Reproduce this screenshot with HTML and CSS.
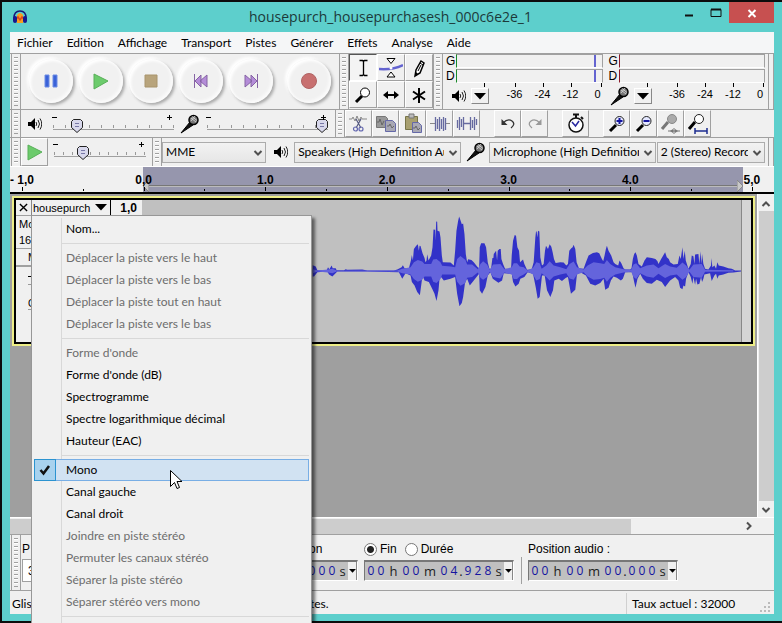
FILE: index.html
```html
<!DOCTYPE html>
<html lang="fr">
<head>
<meta charset="utf-8">
<title>housepurch_housepurchasesh_000c6e2e_1</title>
<link rel="stylesheet" href="styles.css">
</head>
<body>
<svg class="defs" aria-hidden="true">
  <symbol id="speaker" viewBox="0 0 14 14"><path d="M0 5h3l4-4v12l-4-4H0z" fill="#000"/><path d="M8 5q1.500 2 0 4M10 3q3 4 0 8M12 1.500q3.500 5.500 0 11" fill="none" stroke="#222"/></symbol>
  <symbol id="mic" viewBox="0 0 20 20"><path d="M1 19L10 8l3 3z" fill="#111" stroke="#000"/><circle cx="13.500" cy="6" r="4.500" fill="#777" stroke="#000" stroke-width="1.500"/><path d="M11 4l5 4M12 2.500l5 4M11 7l4-5" stroke="#ddd" stroke-width=".8"/></symbol>
  <symbol id="chevron" viewBox="0 0 10 10"><path d="M1.500 3L5 6.500 8.500 3" fill="none" stroke="#505050" stroke-width="2"/></symbol>
  <symbol id="triangle" viewBox="0 0 12 7"><path d="M0 0h12L6 6.500z" fill="#000"/></symbol>
</svg>
<main class="window">
  <header class="titlebar">
    <svg class="logo" viewBox="0 0 16 16"><path d="M5 6q3-4 6 0v8H5z" fill="#f6a020"/><path d="M4 10l2-2 2 3 2-3 2 2" stroke="#d42" stroke-width="1.500" fill="none"/><path d="M2 9Q2 2 8 2t6 7" fill="none" stroke="#181878" stroke-width="1.500"/><rect x="1" y="7" width="4" height="7" rx="2" fill="#18188c"/><rect x="11" y="7" width="4" height="7" rx="2" fill="#18188c"/></svg>
    <h1>housepurch_housepurchasesh_000c6e2e_1</h1>
    <div class="controls">
      <button class="ctl" aria-label="Réduire"><svg viewBox="0 0 12 12"><path d="M2 8.500h8" stroke="#111" stroke-width="2"/></svg></button>
      <button class="ctl" aria-label="Agrandir"><svg viewBox="0 0 12 12"><path d="M1 2.500h10v7H1z" fill="none" stroke="#111"/><path d="M1 2.500h10" stroke="#111" stroke-width="2"/></svg></button>
      <button class="ctl close" aria-label="Fermer"><svg viewBox="0 0 12 12"><path d="M2.500 3l7 7M9.500 3l-7 7" stroke="#fff" stroke-width="2"/></svg></button>
    </div>
  </header>
  <div class="client">
    <nav class="menubar">
      <a href="#">Fichier</a><a href="#">Edition</a><a href="#">Affichage</a><a href="#">Transport</a><a href="#">Pistes</a><a href="#">Générer</a><a href="#">Effets</a><a href="#">Analyse</a><a href="#">Aide</a>
    </nav>

    <div class="row row-main">
      <i class="grip"></i>
      <div class="transport">
        <button class="round" aria-label="Pause"><svg viewBox="0 0 20 20"><path d="M4 4h4v12H4zM12 4h4v12h-4z" fill="#3a62d8" stroke="#6d8ce4"/></svg></button>
        <button class="round" aria-label="Lecture"><svg viewBox="0 0 20 20"><path d="M3 3l14 7-14 8z" fill="#6ccb6c" stroke="#58b058"/></svg></button>
        <button class="round" aria-label="Stop"><svg viewBox="0 0 20 20"><path d="M4 4h12v12H4z" fill="#b8a47c" stroke="#a8946c"/></svg></button>
        <button class="round" aria-label="Début"><svg viewBox="0 0 20 20"><path d="M9 10l7-6v12zM4 10l6-6v12z" fill="#b48cd8" stroke="#8664a4"/><path d="M3.500 3v14" stroke="#8664a4"/></svg></button>
        <button class="round" aria-label="Fin"><svg viewBox="0 0 20 20"><path d="M4 4l7 6-7 6zM10 4l6 6-6 6z" fill="#b48cd8" stroke="#8664a4"/><path d="M16.500 3v14" stroke="#8664a4"/></svg></button>
        <button class="round record" aria-label="Enregistrer"><svg viewBox="0 0 20 20"><circle cx="10" cy="10" r="7.500" fill="#c87070" stroke="#b06464"/></svg></button>
      </div>
      <i class="grip"></i>
      <div class="tools">
        <button class="tool on" aria-label="Sélection"><svg viewBox="0 0 24 24"><path d="M8.500 4.500h3l1 1 1-1h3M8.500 19.500h3l1-1 1 1h3M12.500 5v14" fill="none" stroke="#000" stroke-width="1.300"/></svg></button>
        <button class="tool" aria-label="Enveloppe"><svg viewBox="0 0 24 24"><path d="M0 13q14 1 24-4" fill="none" stroke="#6464d0" stroke-width="2.500"/><path d="M8 2.500h8l-4 5zM8 21h8l-4-5z" fill="#fff" stroke="#000"/><circle cx="12" cy="12" r="1.500" fill="#fff"/></svg></button>
        <button class="tool" aria-label="Retouche"><svg viewBox="0 0 24 24"><path d="M8 20l1-6 5-9 3 2-4 10z" fill="#fff" stroke="#000" stroke-width="1.500"/><path d="M8 20l1-4 2 2z" fill="#000"/><path d="M13 7l3 2M11 15l3-6" stroke="#000"/></svg></button>
        <button class="tool" aria-label="Zoom"><svg viewBox="0 0 24 24"><path d="M5 19l6-6" stroke="#000" stroke-width="3"/><circle cx="14" cy="9.500" r="4.500" fill="#fff" stroke="#000"/></svg></button>
        <button class="tool" aria-label="Glissement"><svg viewBox="0 0 24 24"><path d="M6 12h12" stroke="#000" stroke-width="2"/><path d="M4 12l5-4v8zM20 12l-5-4v8z" fill="#000"/></svg></button>
        <button class="tool" aria-label="Multi-outils"><svg viewBox="0 0 24 24"><path d="M12 5v15M6 8.500l12 8M18 8.500l-12 8" stroke="#000" stroke-width="2"/></svg></button>
      </div>
      <i class="grip"></i>
      <div class="meter">
        <div class="bars play"><span>G</span><b><i></i></b><span>D</span><b><i></i></b></div>
        <div class="scale"><svg class="ic14"><use href="#speaker"/></svg><button class="drop" aria-label="Options de lecture"><svg><use href="#triangle"/></svg></button><span>-36</span><span>-24</span><span>-12</span><span class="zero">0</span></div>
      </div>
      <div class="meter">
        <div class="bars rec"><span>G</span><b></b><span>D</span><b></b></div>
        <div class="scale"><svg class="ic20"><use href="#mic"/></svg><button class="drop" aria-label="Options d’enregistrement"><svg><use href="#triangle"/></svg></button><span>-36</span><span>-24</span><span>-12</span><span class="zero">0</span></div>
      </div>
      <i class="endgrip"></i>
    </div>

    <div class="row row-mix">
      <i class="grip"></i>
      <div class="mixer">
        <svg class="ic14"><use href="#speaker"/></svg>
        <label class="slider"><input type="range" value="20" aria-label="Volume de sortie"></label>
        <svg class="ic20"><use href="#mic"/></svg>
        <label class="slider"><input type="range" value="95" aria-label="Volume d’entrée"></label>
      </div>
      <i class="grip"></i>
      <div class="edit">
        <div class="group">
        <button class="tool" aria-label="Couper"><svg viewBox="0 0 24 24"><path d="M2 7h3l1-2 2 4 2-5 2 5 2-4 1 2h5" fill="none" stroke="#888"/><path d="M9 7l5 9M14 7l-5 9" stroke="#555a80" stroke-width="1.200"/><circle cx="8.500" cy="17" r="2" fill="none" stroke="#6468b0" stroke-width="1.200"/><circle cx="14" cy="17" r="2" fill="none" stroke="#6468b0" stroke-width="1.200"/></svg></button>
        <button class="tool" aria-label="Copier"><svg viewBox="0 0 24 24"><path d="M2.500 4.500h9l2 2v9h-11z" fill="#999" stroke="#777"/><path d="M11.500 8.500h7l3 3v8h-10z" fill="#a8a8b4" stroke="#6468a8"/><path d="M3 10h2l1-3 2 6 2-4M13 14h2l1-2 2 4 2-2" fill="none" stroke="#666"/></svg></button>
        <button class="tool" aria-label="Coller"><svg viewBox="0 0 24 24"><path d="M4.500 4.500h12v13h-12z" fill="#a8a070" stroke="#777448"/><path d="M8 2h5v4H8z" fill="#bbb" stroke="#777"/><path d="M11.500 10.500h6l3 3v7h-9z" fill="#a8a8b4" stroke="#6468a8"/><path d="M12 16h2l1-2 2 4 2-2" fill="none" stroke="#666"/></svg></button>
        <button class="tool" aria-label="Rogner"><svg viewBox="0 0 24 24"><path d="M2 11.500h5M17 11.500h5" stroke="#888"/><path d="M7.500 5v14M9.500 7v10M11.500 5v14M13.500 7v10M15.500 5v14M17.500 6v12" fill="none" stroke="#666aa0" stroke-width="1.300"/></svg></button>
        <button class="tool" aria-label="Silence"><svg viewBox="0 0 24 24"><path d="M2.500 8v8M4.500 5v13M6.500 7v8M8.500 5v13M8 11.500h8M15.500 5v13M17.500 8v8M19.500 5v13M21.500 7v6" fill="none" stroke="#666aa0" stroke-width="1.300"/></svg></button>
        </div>
        <div class="group">
        <button class="tool" aria-label="Annuler"><svg viewBox="0 0 24 24"><path d="M7 11q5-5 9-2t-1 7" fill="none" stroke="#333" stroke-width="1.300"/><path d="M5.500 7v6h6z" fill="#333"/></svg></button>
        <button class="tool" aria-label="Rétablir"><svg viewBox="0 0 24 24"><path d="M17 11q-5-5-9-2t1 7" fill="none" stroke="#999" stroke-width="1.300"/><path d="M18.500 7v6h-6z" fill="#999"/></svg></button>
        </div>
        <div class="group">
        <button class="tool" aria-label="Synchroniser"><svg viewBox="0 0 24 24"><circle cx="12" cy="13" r="7" fill="#fff" stroke="#111" stroke-width="1.500"/><path d="M12 3v3M9 2.500h6M17 5l2 2" stroke="#111" stroke-width="2"/><path d="M8 10l3.500 4L15 9" fill="none" stroke="#2828a0" stroke-width="1.500"/></svg></button>
        </div>
        <div class="group">
        <button class="tool" aria-label="Zoom avant"><svg viewBox="0 0 24 24"><path d="M5 19l6-6" stroke="#000" stroke-width="3"/><circle cx="14.500" cy="9" r="4.500" fill="#e4e8ff" stroke="#222"/><path d="M11.500 9h6M14.500 6v6" stroke="#1414a0" stroke-width="2"/></svg></button>
        <button class="tool" aria-label="Zoom arrière"><svg viewBox="0 0 24 24"><path d="M5 19l6-6" stroke="#000" stroke-width="3"/><circle cx="14.500" cy="9" r="4.500" fill="#e4e8ff" stroke="#222"/><path d="M11.500 9h6" stroke="#1414a0" stroke-width="2"/></svg></button>
        <button class="tool" aria-label="Ajuster la sélection"><svg viewBox="0 0 24 24"><path d="M3 17l6-7" stroke="#777" stroke-width="3"/><circle cx="13" cy="7" r="4.500" fill="#aaa" stroke="#888"/><path d="M9 19h12M15 16v6" stroke="#777"/><path d="M11 19l3-2v4zM19 19l-3-2v4z" fill="#777"/></svg></button>
        <button class="tool" aria-label="Ajuster le projet"><svg viewBox="0 0 24 24"><path d="M3 17l6-7" stroke="#000" stroke-width="3"/><circle cx="13" cy="7" r="4.500" fill="#fff" stroke="#222"/><path d="M9 19h12M9 16v6M21 16v6" stroke="#1c2c90" stroke-width="1.500"/></svg></button>
        </div>
      </div>
    </div>

    <div class="row row-device">
      <i class="grip"></i>
      <button class="tool playat" aria-label="Lecture à vitesse"><svg viewBox="0 0 20 20"><path d="M3 3l14 7-14 8z" fill="#6ccb6c" stroke="#58b058"/></svg></button>
      <label class="slider speed"><input type="range" value="32" aria-label="Vitesse de lecture"></label>
      <i class="grip"></i>
      <div class="devices">
        <span class="pick host"><select aria-label="Hôte audio"><option>MME</option></select><svg><use href="#chevron"/></svg></span>
        <svg class="ic14"><use href="#speaker"/></svg>
        <span class="pick"><select aria-label="Sortie"><option>Speakers (High Definition Audio)</option></select><svg><use href="#chevron"/></svg></span>
        <svg class="ic20"><use href="#mic"/></svg>
        <span class="pick"><select aria-label="Entrée"><option>Microphone (High Definition Audio)</option></select><svg><use href="#chevron"/></svg></span>
        <span class="pick chan"><select aria-label="Canaux"><option>2 (Stereo) Record</option></select><svg><use href="#chevron"/></svg></span>
      </div>
      <i class="endgrip"></i>
    </div>

    <div class="ruler">
      <div class="region"><svg viewBox="0 0 6 12"><path d="M6 0v12L0 6z" fill="#c8c8c8" stroke="#888"/></svg><i></i><svg viewBox="0 0 6 12"><path d="M0 0v12l6-6z" fill="#c8c8c8" stroke="#888"/></svg></div>
      <div class="marks">
        <span>- 1,0</span><span></span><span>0,0</span><span></span><span>1.0</span><span></span><span>2.0</span><span></span><span>3.0</span><span></span><span>4.0</span><span></span><span>5,0</span>
      </div>
    </div>

    <div class="workspace">
      <div class="tracks">
        <section class="track">
          <div class="panel">
            <div class="head"><button class="x" aria-label="Fermer la piste"><svg viewBox="0 0 10 10"><path d="M1 1l8 8M9 1L1 9" stroke="#000" stroke-width="1.500"/></svg></button><button class="name">housepurch<svg><use href="#triangle"/></svg></button></div>
            <p>Mo</p><p>16</p><div class="mute">M</div>
            <div class="gain"></div><div class="pan">G</div>
          </div>
          <div class="vruler">1,0</div>
          <svg class="wave" viewBox="-477 -3 1800 429" preserveAspectRatio="none">
            <path fill="#3232c8" d="M36 211V194L45 198 50 209 78 209 82 200 86 206 93 195 96 203 105 203 108 209 130 209 135 206 140 208 185 207 200 210 280 210 290 207 303 200 307 194 312 203 325 203 331 180 334 163 337 180 340 145 347 135 352 131 355 150 357 135 360 136 366 158 372 172 375 185 378 180 380 161 384 180 392 165 396 140 399 86 404 87 405 120 407 62 410 63 411 90 417 92 420 110 424 165 427 185 450 186 460 195 464 150 468 90 473 60 476 47 480 58 484 70 488 68 492 100 496 160 500 185 503 176 513 178 520 185 530 198 536 204 538 140 542 128 552 128 557 140 562 185 567 205 572 205 576 172 579 172 580 160 587 150 590 180 592 150 597 145 601 145 603 175 608 190 614 205 632 206 634 165 638 120 643 103 647 105 651 140 656 150 659 185 668 177 672 190 680 208 694 206 700 185 705 110 707 92 709 92 711 110 713 90 717 92 720 170 725 195 730 190 734 150 737 135 743 145 748 131 753 138 757 155 761 175 766 187 780 185 790 186 798 195 803 190 807 150 813 143 817 140 820 132 825 145 829 185 836 203 850 205 857 185 865 165 878 157 890 155 897 158 905 175 909 182 913 165 917 145 920 135 925 150 933 165 940 185 945 190 954 195 958 180 963 187 970 203 975 207 990 207 994 203 998 175 1002 160 1006 155 1010 165 1015 190 1025 198 1033 180 1040 170 1055 172 1066 175 1072 182 1075 190 1083 175 1095 155 1100 170 1106 175 1110 185 1120 192 1133 190 1138 165 1142 175 1147 140 1150 175 1154 150 1157 180 1165 205 1172 190 1175 165 1180 167 1183 190 1185 162 1195 160 1198 190 1201 152 1204 190 1206 160 1210 190 1215 205 1225 207 1233 195 1234 172 1237 200 1243 195 1248 205 1252 185 1256 195 1270 198 1285 203 1295 205 1300 207 1305 210 1323 210V213L1300 216 1285 217 1270 222 1256 225 1252 235 1248 220 1243 225 1235 242 1230 218 1213 222 1210 235 1206 245 1203 230 1198 250 1192 252 1188 235 1185 253 1180 230 1177 250 1172 230 1165 215 1158 235 1155 258 1150 255 1147 267 1140 262 1135 240 1125 230 1110 240 1095 260 1085 245 1070 238 1055 250 1040 248 1028 235 1020 220 1012 235 1006 262 1002 245 996 215 975 215 968 235 962 240 950 232 940 228 932 240 925 262 915 268 910 235 900 248 885 255 870 250 857 225 840 215 830 222 825 268 812 280 803 230 797 232 785 242 775 235 762 240 758 270 750 290 740 270 733 225 725 225 718 290 712 295 706 260 698 220 682 215 672 230 660 235 655 250 645 258 638 245 634 220 610 218 605 240 594 247 577 235 570 215 562 225 555 260 545 280 538 270 536 220 520 240 508 255 500 235 494 245 488 290 484 308 477 318 470 280 464 230 450 235 430 240 418 225 414 270 408 302 402 280 395 265 385 245 372 240 366 225 358 285 350 275 342 255 334 245 330 225 315 218 305 235 295 215 200 213 110 213 95 228 85 222 80 213 50 215 40 228 36 228z"/>
            <path fill="#6464dc" d="M36 211V206L50 210 82 207 95 205 110 211 290 210 305 205 330 200 340 185 352 178 365 183 372 190 392 190 398 177 408 175 420 185 425 196 450 198 464 200 470 175 480 166 495 178 500 192 515 192 532 206 540 190 548 182 560 192 568 208 578 192 600 190 612 206 634 200 640 188 650 188 658 198 670 200 682 210 698 202 708 185 718 188 724 205 738 195 748 182 760 195 780 200 798 206 808 190 820 183 830 200 850 207 862 195 880 185 900 188 912 190 920 178 930 190 945 200 970 206 993 208 1000 192 1008 188 1020 203 1040 195 1060 192 1075 203 1095 190 1110 198 1130 202 1147 186 1158 195 1168 208 1180 192 1205 190 1215 208 1300 209 1300 213 1215 214 1205 232 1180 230 1168 214 1158 230 1147 238 1130 222 1110 225 1095 233 1075 220 1060 232 1040 228 1020 218 1008 236 1000 230 993 214 970 216 945 222 930 232 920 244 912 232 900 236 880 238 862 228 850 215 830 222 820 238 808 234 798 218 780 222 760 228 748 240 738 230 724 218 718 236 708 240 698 222 682 214 670 222 658 228 650 236 640 236 634 222 612 216 600 234 578 230 568 214 560 230 548 238 540 232 532 216 515 230 500 232 495 248 480 256 470 244 464 222 450 222 425 222 420 236 408 248 398 244 392 228 372 228 365 238 352 244 340 236 330 222 305 218 290 213 110 212 95 218 82 216 50 213 36 218z"/>
          </svg>
          <div class="after"></div>
        </section>
      </div>
      <div class="vscroll"><svg><use href="#chevron"/></svg><i></i><svg><use href="#chevron"/></svg></div>
    </div>
    <div class="hscroll"><i></i><svg><use href="#chevron"/></svg></div>

    <div class="selection">
      <i class="grip"></i>
      <div class="rate"><label for="rate">P</label><input id="rate" type="text" value="3"></div>
      <div class="start"><span>on</span><div class="time"><b class="d">0</b><b class="d">0</b><b class="d">0</b><b class="s">s</b><button aria-label="Format"><svg><use href="#triangle"/></svg></button></div></div>
      <div class="end">
        <div class="radios"><label><input type="radio" name="len" checked>Fin</label><label><input type="radio" name="len">Durée</label></div>
        <div class="time"><b class="d">0</b><b class="d">0</b><b class="h">h</b><b class="d">0</b><b class="d">0</b><b class="m">m</b><b class="d">0</b><b class="d">4</b><b class="p">.</b><b class="d">9</b><b class="d">2</b><b class="d">8</b><b class="s">s</b><button aria-label="Format"><svg><use href="#triangle"/></svg></button></div>
      </div>
      <i class="bar"></i>
      <div class="pos"><span>Position audio :</span>
        <div class="time"><b class="d">0</b><b class="d">0</b><b class="h">h</b><b class="d">0</b><b class="d">0</b><b class="m">m</b><b class="d">0</b><b class="d">0</b><b class="p">.</b><b class="d">0</b><b class="d">0</b><b class="d">0</b><b class="s">s</b><button aria-label="Format"><svg><use href="#triangle"/></svg></button></div>
      </div>
    </div>
    <footer class="status"><span class="lead">Glis</span><span class="tail">tes.</span><span class="actual">Taux actuel : 32000</span><svg viewBox="0 0 12 12"><path d="M8 0h2v2H8zM4 4h2v2H4zM8 4h2v2H8zM0 8h2v2H0zM4 8h2v2H4zM8 8h2v2H8z" fill="#bbb"/></svg></footer>
  </div>

  <ul class="popup">
    <li>Nom...</li>
    <li class="sep"></li>
    <li class="off">Déplacer la piste vers le haut</li>
    <li class="off">Déplacer la piste vers le bas</li>
    <li class="off">Déplacer la piste tout en haut</li>
    <li class="off">Déplacer la piste vers le bas</li>
    <li class="sep"></li>
    <li class="off">Forme d'onde</li>
    <li>Forme d'onde (dB)</li>
    <li>Spectrogramme</li>
    <li>Spectre logarithmique décimal</li>
    <li>Hauteur (EAC)</li>
    <li class="sep"></li>
    <li class="hot"><i><svg viewBox="0 0 12 12"><path d="M1.500 6l3 3.500L10 2" fill="none" stroke="#111" stroke-width="2.500"/></svg></i>Mono</li>
    <li>Canal gauche</li>
    <li>Canal droit</li>
    <li class="off">Joindre en piste stéréo</li>
    <li class="off">Permuter les canaux stéréo</li>
    <li class="off">Séparer la piste stéréo</li>
    <li class="off">Séparer stéréo vers mono</li>
    <li class="sep"></li>
  </ul>
  <svg class="cursor" viewBox="0 0 12 20"><path d="M.5.5v16l4-4 2.500 6 2.500-1-2.500-6h5z" fill="#fff" stroke="#000"/></svg>
</main>
</body>
</html>
```
FILE: styles.css
```css
* { box-sizing: border-box; }
body {
  margin: 0;
  height: 100vh;
  padding: 2px 0 2px 2px;
  background: #0c0c0c;
  overflow: hidden;
  font: 12px/16px Lato, sans-serif;
  color: #000;
}
.defs { position: absolute; width: 0; height: 0; }
button, input, select { font: inherit; color: inherit; margin: 0; padding: 0; border: 0; background: none; }
svg { display: block; flex: none; }
.window {
  position: relative;
  height: 100%;
  padding: 0 8px 7px;
  background: #5dcfcc;
  display: flex;
  flex-direction: column;
}
.titlebar { height: 30px; flex: none; display: flex; align-items: center; }
.logo { width: 16px; height: 16px; margin-left: 2px; }
.titlebar h1 { flex: 1; margin: 0; padding-left: 78px; font: 400 14px/30px "Open Sans", sans-serif; text-align: center; color: #1c3a3a; }
.controls { display: flex; align-self: flex-start; }
.ctl { width: 27px; height: 21px; display: grid; place-items: center; }
.ctl svg { width: 12px; height: 12px; }
.ctl.close { width: 45px; background: #c75050; }
.client { flex: 1; min-height: 0; background: #f0f0f0; display: flex; flex-direction: column; }
.menubar { flex: none; height: 21px; padding: 0 7px; display: flex; gap: 14px; align-items: center; background: #f5f6f7; }
.menubar a { color: #000; text-decoration: none; }

.row { flex: none; display: flex; padding: 0 0 0 1px; border-top: 1px solid #a0a0a0; }
.row-main { height: 56px; }
.row-mix { height: 28px; }
.row-device { height: 29px; }
.grip {
  width: 10px;
  flex: none;
  border: solid #a0a0a0;
  border-width: 0 1px;
  background: repeating-linear-gradient(#a0a0a0 0 1px, #fff 1px 2px, #f0f0f0 2px 4px) center 3px / 4px calc(100% - 6px) no-repeat #f0f0f0;
}
.endgrip { width: 6px; flex: none; margin-left: auto; border: solid #a0a0a0; border-width: 0 1px; }
.ic14 { width: 14px; height: 14px; }
.ic20 { width: 20px; height: 20px; }
.transport { width: 318px; display: flex; align-items: center; padding: 0 0 2px 8px; gap: 6px; }
.round {
  width: 44px; height: 44px; flex: none;
  border-radius: 50%;
  background: #f1f1f1;
  box-shadow: 2px 2px 3px #aaa, -2px -2px 3px #fff, inset 2px 2px 3px #fff, inset -2px -2px 3px #fbfbfb;
  display: grid; place-items: center;
}
.round svg { width: 20px; height: 20px; }
.record { margin-left: 8px; }
.tools { display: grid; grid-template-columns: repeat(3, 28px); grid-template-rows: repeat(2, 27px); }
.tool { width: 28px; border: 1px solid; border-color: #fff #a0a0a0 #a0a0a0 #fff; display: grid; place-items: center; }
.tool svg { width: 24px; height: 24px; }
.tool.on { border-color: #555 #fff #fff #555; background: #f4f4f4; }
.meter { flex: 1; padding-left: 3px; font: 12px/14px "Liberation Sans", sans-serif; }
.bars { display: grid; grid-template-columns: 10px 1fr; row-gap: 1px; height: 29px; padding-right: 3px; }
.bars b { border: 1px solid; border-color: #a0a0a0 #a0a0a0 #fff #1a8a2a; display: flex; justify-content: flex-end; padding-right: 6px; }
.bars.rec b { border-left-color: #8a1a2a; }
.bars b i { width: 2px; background: #6464d0; }
.scale { display: flex; align-items: center; height: 26px; font-size: 11px; padding-left: 1px; }
.scale .ic14 { margin: 0 5px; }
.scale .ic20 { margin-right: 4px; }
.scale span { position: relative; width: 28px; padding-bottom: 4px; text-align: center; }
.scale span.zero { width: 21px; padding-left: 5px; }
.scale span::before, .drop::before { content: ""; position: absolute; left: 50%; top: -4px; width: 1px; height: 4px; background: #000; }
.scale .zero::before { left: 16px; }
.drop { position: relative; width: 18px; height: 16px; margin-right: auto; border: 1px solid; border-color: #fff #888 #888 #fff; display: grid; place-items: center; }
.drop::before { left: 12px; top: -6px; }
.drop svg { width: 12px; height: 7px; }

.mixer { width: 314px; display: flex; align-items: center; padding-left: 7px; }
.mixer .ic14 { margin-right: 5px; }
.mixer .ic20 { margin-right: 1px; }
.slider { position: relative; flex: none; width: 133px; height: 26px; }
.slider input {
  appearance: none; display: block; width: 100%; height: 26px;
  background:
    linear-gradient(#a0a0a0, #a0a0a0) 6px 18px / calc(100% - 12px) 1px no-repeat,
    repeating-linear-gradient(90deg, #999 0 1px, transparent 1px 12px) 6px 14px / calc(100% - 12px) 3px no-repeat;
}
.slider input::-webkit-slider-thumb {
  appearance: none; width: 12px; height: 14px; margin-top: 4px;
  background: url("data:image/svg+xml,%3Csvg xmlns='http://www.w3.org/2000/svg' viewBox='0 0 12 14'%3E%3Cpath d='M2.500 .5h7l2 2v6l-5.500 5-5.500-5v-6z' fill='%23d8d8ec' stroke='%23222'/%3E%3Cpath d='M4 4.500h4M4 7.500h4' stroke='%237878a8'/%3E%3C/svg%3E");
}
.slider::before, .slider::after { content: ""; position: absolute; top: 4px; width: 5px; height: 5px; pointer-events: none; background: linear-gradient(#000, #000) center / 5px 1px no-repeat; }
.slider::before { left: 5px; }
.slider::after { right: 8px; background: linear-gradient(#000, #000) center / 5px 1px no-repeat, linear-gradient(#000, #000) center / 1px 5px no-repeat; }
.slider.speed { width: 104px; }
.slider.speed input {
  background:
    linear-gradient(#a0a0a0, #a0a0a0) 6px 18px / calc(100% - 12px) 1px no-repeat,
    repeating-linear-gradient(90deg, #999 0 1px, transparent 1px 9px) 6px 14px / calc(100% - 12px) 3px no-repeat;
}
.edit { display: flex; gap: 14px; }
.group { display: flex; }
.edit .tool { width: 27px; }
.playat { width: 27px; }
.playat svg { width: 20px; height: 20px; }
.devices { flex: 1; min-width: 0; display: flex; align-items: center; gap: 1px; margin-right: 3px; }
.devices .ic14 { margin: 0 5px 0 7px; }
.devices .ic20 { margin: 0 2px 0 4px; }
.pick { position: relative; flex: 168 1 0; min-width: 0; }
.pick.host { flex-grow: 105; }
.pick.chan { flex-grow: 109; }
.pick select { appearance: none; display: block; width: 100%; height: 21px; padding: 0 16px 0 3px; border: 1px solid #acacac; background: linear-gradient(#f2f2f2, #e6e6e6); }
.pick svg { position: absolute; right: 3px; top: 6px; width: 10px; height: 10px; pointer-events: none; }

.ruler { flex: none; position: relative; height: 28px; border-top: 1px solid #fff; border-bottom: 2px solid #000; overflow: hidden; }
.region { position: absolute; left: 133px; right: 31px; top: 0; bottom: 0; background: #9696ad; display: flex; align-items: center; padding-top: 12px; }
.region i { flex: 1; height: 2px; border-top: 1px solid #777; background: #bbb; }
.region svg { width: 6px; height: 12px; }
.marks { position: relative; height: 25px; padding: 4px 22px 0 12px; display: flex; justify-content: space-between; font: bold 12px/18px "Liberation Sans", sans-serif; }
.marks span { position: relative; width: 0; display: flex; justify-content: center; white-space: nowrap; }
.marks span::after { content: ""; position: absolute; left: 0; bottom: 1px; width: 1px; height: 2px; background: #000; }
.marks span:nth-child(odd)::after { height: 4px; }

.workspace { flex: 1; min-height: 0; display: flex; }
.tracks { flex: 1; min-width: 0; background: #9f9f9f; padding: 2px 3px 0 2px; }
.track { height: 146px; border: 2px solid #000; outline: 2px solid #eeee88; margin: 2px 1px 0 2px; display: flex; background: #f0f0f0; }
.panel { width: 95px; flex: none; font: 11px/16px "Liberation Sans", sans-serif; border-right: 1px solid #000; }
.head { display: flex; height: 16px; border-bottom: 1px solid #a0a0a0; }
.x { width: 16px; display: grid; place-items: center; border-right: 1px solid #888; }
.x svg { width: 9px; height: 9px; }
.name { flex: 1; display: flex; align-items: center; justify-content: space-between; padding: 0 3px 0 1px; }
.name svg { width: 12px; height: 7px; }
.panel p { margin: 0; padding-left: 3px; }
.mute { padding-left: 12px; border: solid #a0a0a0; border-width: 1px 0 2px; }
.gain { height: 9px; margin: 9px 0 14px 12px; border-top: 1px solid #000; border-bottom: 1px solid #999; }
.pan { margin-left: 12px; line-height: 10px; font-size: 10px; border-bottom: 1px solid #999; }
.vruler { width: 31px; flex: none; padding-right: 5px; text-align: right; font: bold 12px/16px "Liberation Sans", sans-serif; }
.wave { flex: 1; min-width: 0; width: 0; height: 100%; background: #c0c0c0; }
.after { width: 10px; flex: none; border-left: 1px solid #888; background: #d5d5d5; }
.vscroll { width: 17px; flex: none; display: flex; flex-direction: column; align-items: center; padding: 5px 0 2px; border-left: 1px solid #fff; background: #f0f0f0; }
.vscroll i { width: 15px; flex: 1; margin: 2px 0 4px; background: #cdcdcd; }
.vscroll svg { width: 10px; height: 10px; }
.vscroll svg:first-child { transform: rotate(180deg); }
.hscroll { flex: none; height: 17px; border-top: 1px solid #fff; display: flex; align-items: center; justify-content: space-between; padding-right: 20px; }
.hscroll i { width: calc(100% - 123px); height: 15px; background: #cdcdcd; }
.hscroll svg { width: 10px; height: 10px; transform: rotate(-90deg); }

.selection { flex: none; display: flex; height: 57px; padding-left: 1px; border: solid #a0a0a0; border-width: 1px 0; font: 12px/16px "Liberation Sans", sans-serif; }
.selection > div { padding-top: 6px; }
.rate { width: 44px; padding-left: 1px; }
.rate label { display: block; }
.rate input { width: 44px; height: 23px; margin-top: 2px; padding-left: 5px; border: 1px solid #a0a0a0; background: #fff; }
.start { margin-left: 221px; width: 72px; text-align: left; }
.start span { margin-left: 23px; }
.start .time { margin-left: auto; }
.end { margin-left: 6px; }
.time { display: flex; width: max-content; height: 21px; margin-top: 3px; padding-left: 1px; border: solid; border-width: 2px 1px 1px 1px; border-color: #777 #fff #fff #777; background: #c0c0c0; }
.time b { font: 13px/18px "Open Sans", sans-serif; text-align: center; color: #222; }
.time .d { width: 10px; color: #1414a0; font-size: 12px; }
.time .h { width: 15px; }
.time .m { width: 18px; }
.time .p { width: 4px; }
.time .s { width: 11px; }
.time button { width: 9px; background: #f0f0f0; display: grid; place-items: center; border-right: 1px solid #888; }
.time button svg { width: 7px; height: 4px; }
.radios { display: flex; gap: 8px; }
.radios label { display: flex; align-items: center; gap: 3px; }
.radios input { appearance: none; width: 13px; height: 13px; border: 1px solid #777; border-radius: 50%; background: #fff; }
.radios input:checked { background: radial-gradient(#222 0 3px, #fff 4px); }
.bar { width: 1px; margin: 22px 6px 6px 7px; background: #a0a0a0; }
.status { flex: none; height: 23px; display: flex; align-items: center; padding: 2px 2px 0; }
.lead { width: 298px; }
.actual { margin-left: auto; width: 134px; padding-left: 5px; border-left: 1px solid #d0d0d0; line-height: 21px; }
.status svg { width: 12px; height: 12px; align-self: flex-end; }

.popup {
  position: absolute; left: 29px; top: 213px; bottom: -8px; width: 281px;
  margin: 0; padding: 2px; list-style: none; overflow: hidden;
  border: 1px solid #979797; border-bottom: 0;
  background: linear-gradient(#d8d8d8, #d8d8d8) 29px 2px / 1px 100% no-repeat #f0f0f0;
  box-shadow: 3px 3px 3px #0008;
}
.popup li { position: relative; height: 22px; padding-left: 32px; line-height: 22px; white-space: nowrap; }
.popup .off { color: #6d6d6d; }
.popup .sep { height: 7px; margin-left: 28px; background: linear-gradient(#d8d8d8, #d8d8d8) 0 3px / 100% 1px no-repeat; }
.popup .hot { background: #d1e2f2; box-shadow: inset 0 0 0 1px #78aee5; }
.hot i { position: absolute; left: 0; top: 0; width: 22px; height: 22px; display: grid; place-items: center; border: 1px solid #2b93d0; background: #a8d2ee; }
.hot svg { width: 12px; height: 12px; }
.cursor { position: absolute; left: 168px; top: 468px; width: 12px; height: 20px; }
```
